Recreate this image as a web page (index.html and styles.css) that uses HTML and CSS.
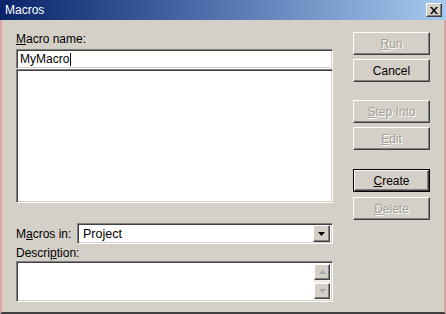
FILE: index.html
```html
<!DOCTYPE html>
<html lang="en">
<head>
    <meta charset="UTF-8">
    <title>Macros</title>
    <link rel="stylesheet" href="styles.css">
</head>
<body>

<div class="window">
    <div class="titlebar">
        <span class="title">Macros</span>
        <span class="close-btn">
            <svg width="8" height="7" viewBox="0 0 8 7"><path d="M0 0h2l2 2.5 2-2.5h2l-3 3.5 3 3.5h-2l-2-2.5-2 2.5h-2l3-3.5z" fill="#000"/></svg>
        </span>
    </div>

    <div class="dialog">
        <!-- left side: name, list, location, description -->
        <div class="left-col">
            <div class="label"><u>M</u>acro name:</div>
            <div class="name-field sunken">MyMacro<span class="caret"></span></div>
            <div class="macro-list sunken"></div>

            <div class="macros-in">
                <span class="label in-label">M<u>a</u>cros in:</span>
                <div class="select sunken">
                    <span class="select-text">Project</span>
                    <span class="drop-btn raised">
                        <svg width="7" height="4" viewBox="0 0 7 4"><path d="M0 0h7l-3.5 4z" fill="#000"/></svg>
                    </span>
                </div>
            </div>

            <div class="label desc-label">Descri<u>p</u>tion:</div>
            <div class="description sunken">
                <div class="scrollbar">
                    <span class="scroll-btn raised">
                        <svg width="7" height="4" viewBox="0 0 7 4"><path d="M3.5 0l3.5 4h-7z" fill="#a8a8a8"/></svg>
                    </span>
                    <span class="scroll-track"></span>
                    <span class="scroll-btn raised">
                        <svg width="7" height="4" viewBox="0 0 7 4"><path d="M0 0h7l-3.5 4z" fill="#a8a8a8"/></svg>
                    </span>
                </div>
            </div>
        </div>

        <!-- right side: command buttons -->
        <div class="button-col">
            <div class="button raised disabled btn-run"><u>R</u>un</div>
            <div class="button raised btn-cancel">Cancel</div>
            <div class="button raised disabled btn-step"><u>S</u>tep Into</div>
            <div class="button raised disabled btn-edit"><u>E</u>dit</div>
            <div class="default-frame btn-create"><div class="button raised"><u>C</u>reate</div></div>
            <div class="button raised disabled btn-delete"><u>D</u>elete</div>
        </div>
    </div>
</div>

</body>
</html>
```

FILE: styles.css
```css
body {
    margin: 0;
    font-family: "Liberation Sans", Arial, sans-serif;
    font-size: 12px;
    color: #000;
    background-color: #d4d0c8;
}
.window {
    width: 446px;
    height: 314px;
    box-sizing: border-box;
    background-color: #d4d0c8;
    border-left: 2px solid #dca6a6;
    border-right: 2px solid #d9a2a6;
    border-bottom: 2px solid #404040;
}
.titlebar {
    height: 20px;
    margin-left: -2px;
    margin-right: -2px;
    display: flex;
    align-items: center;
    justify-content: space-between;
    padding: 0 4px 0 5px;
    background: linear-gradient(to right, #0a246a, #3a5c9c 35%, #a6caf0);
}
.title {
    color: #fff;
    font-size: 12px;
}
.close-btn {
    width: 16px;
    height: 14px;
    box-sizing: border-box;
    display: flex;
    align-items: center;
    justify-content: center;
    background-color: #d4d0c8;
    border-top: 1px solid #fff;
    border-left: 1px solid #fff;
    border-right: 1px solid #404040;
    border-bottom: 1px solid #404040;
    box-shadow: inset -1px -1px #808080;
}
.dialog {
    display: flex;
    padding: 12px 0 0 14px;
    gap: 20px;
}

/* bevels */
.sunken {
    box-sizing: border-box;
    background-color: #fff;
    border-top: 1px solid #808080;
    border-left: 1px solid #808080;
    border-right: 1px solid #fff;
    border-bottom: 1px solid #fff;
    box-shadow: inset 1px 1px #404040, inset -1px -1px #d4d0c8;
}
.raised {
    box-sizing: border-box;
    background-color: #d4d0c8;
    border-top: 1px solid #fff;
    border-left: 1px solid #fff;
    border-right: 1px solid #404040;
    border-bottom: 1px solid #404040;
    box-shadow: inset -1px -1px #808080;
}

/* left column */
.left-col {
    width: 317px;
    display: flex;
    flex-direction: column;
}
.label {
    line-height: 14px;
    height: 14px;
}
.name-field {
    margin-top: 3px;
    height: 20px;
    padding: 2px 3px;
    line-height: 15px;
    display: flex;
    align-items: center;
}
.caret {
    width: 1px;
    height: 13px;
    background-color: #000;
    margin-left: 1px;
}
.macro-list {
    height: 134px;
}
.macros-in {
    display: flex;
    align-items: center;
    margin-top: 20px;
}
.in-label {
    width: 61px;
}
.select {
    flex: 1;
    height: 21px;
    display: flex;
    align-items: center;
    justify-content: space-between;
    padding: 2px;
}
.select-text {
    padding-left: 3px;
    font-size: 12.5px;
}
.drop-btn {
    width: 17px;
    height: 17px;
    display: flex;
    align-items: center;
    justify-content: center;
}
.desc-label {
    margin-top: 2px;
}
.description {
    margin-top: 1px;
    height: 41px;
    display: flex;
    justify-content: flex-end;
    padding: 2px;
}
.scrollbar {
    width: 16px;
    display: flex;
    flex-direction: column;
}
.scroll-btn {
    height: 16px;
    display: flex;
    align-items: center;
    justify-content: center;
}
.scroll-track {
    flex: 1;
    background-color: #f2f0ec;
}

/* right column */
.button-col {
    width: 77px;
    display: flex;
    flex-direction: column;
}
.button {
    height: 23px;
    display: flex;
    align-items: center;
    justify-content: center;
}
.disabled {
    color: #a19e96;
    text-shadow: 1px 1px #fff;
}
.default-frame {
    border: 1px solid #000;
}
.default-frame .button {
    height: 21px;
}
.btn-cancel {
    margin-top: 4px;
}
.btn-step {
    margin-top: 18px;
}
.btn-edit {
    margin-top: 4px;
}
.btn-create {
    margin-top: 19px;
}
.btn-delete {
    margin-top: 5px;
}
```
